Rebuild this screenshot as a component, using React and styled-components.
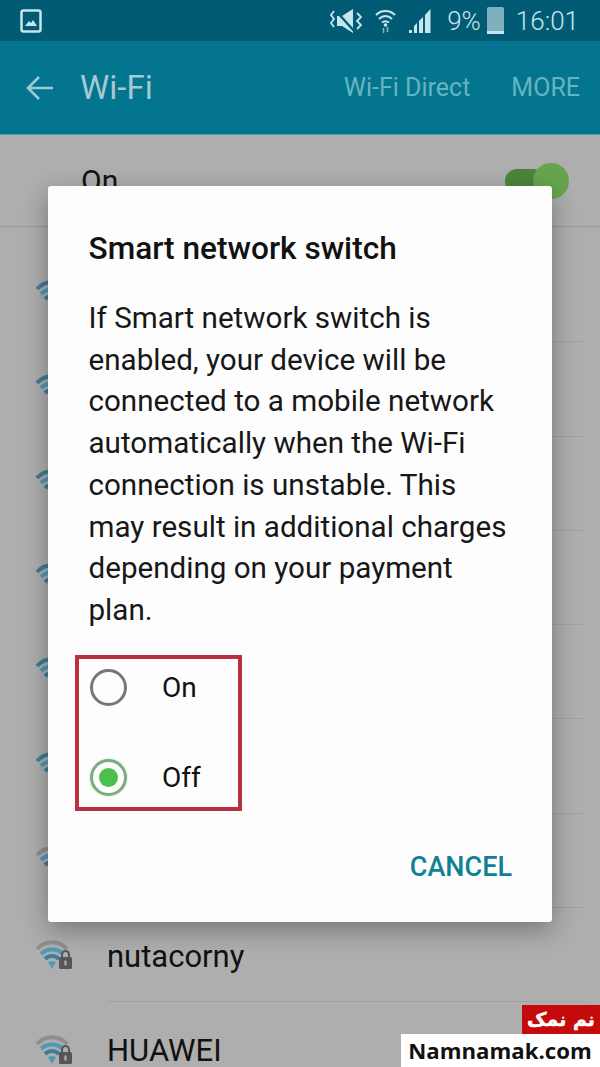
import styled, { createGlobalStyle } from "styled-components";

const GlobalStyle = createGlobalStyle`
  html, body {
    margin: 0;
    padding: 0;
    background: #aeaeae;
  }
  * {
    box-sizing: border-box;
  }
`;

const networks = ["", "", "", "", "", "", "", "nutacorny", "HUAWEI"];

const WifiLock = ({ faded }) => (
  <svg width="40" height="34" viewBox="0 0 40 34" fill="none">
    <path d="M2 12 C10 3 24 3 32 12" stroke={faded ? "#8f8f8f" : "#3f7d97"} strokeWidth="4" />
    <path d="M6 17 C12 11 22 11 28 17" stroke="#4f9ab6" strokeWidth="4" />
    <path d="M10 22 C14 18 20 18 24 22" stroke="#3f7d97" strokeWidth="4" />
    <path d="M13 25 L17 32 L21 25 C19 24 15 24 13 25 Z" fill="#4f9ab6" />
    <rect x="24" y="20" width="13" height="12" rx="1.5" fill="#565656" />
    <path d="M27 21 V17.5 a3.5 3.5 0 0 1 7 0 V21" stroke="#565656" strokeWidth="2" />
    <rect x="29.5" y="23.5" width="2" height="5" fill="#b5b5b5" />
  </svg>
);

const App = () => {
  return (
    <Screen>
      <GlobalStyle />
      <StatusBar>
        <svg width="22" height="24" viewBox="0 0 22 24" fill="none">
          <rect x="1.5" y="1.5" width="19" height="21" rx="2" stroke="#c5e6ec" strokeWidth="2.5" />
          <path d="M5 17 L9 12 L11 14 L13 11 L17 17 Z" fill="#c5e6ec" />
        </svg>
        <StatusRight>
          <svg width="32" height="26" viewBox="0 0 32 26" fill="none">
            <path d="M7 8 H12 L23 1 V25 L12 18 H7 Z" fill="#c5e6ec" />
            <path d="M6 3 L25 24" stroke="#025b74" strokeWidth="2.4" />
            <path d="M4 3 L1 7 L4 11 L1 15 L4 19" stroke="#c5e6ec" strokeWidth="1.8" />
            <path d="M27 5 L31 9 L27 13 L31 17 L27 21" stroke="#c5e6ec" strokeWidth="1.8" />
          </svg>
          <svg width="21" height="24" viewBox="0 0 21 24" fill="none">
            <path d="M1 6 C6 0.5 15 0.5 20 6" stroke="#c5e6ec" strokeWidth="2" />
            <path d="M4 10 C8 6 13 6 17 10" stroke="#c5e6ec" strokeWidth="2" />
            <path d="M7 13.5 C9 12 12 12 14 13.5" stroke="#c5e6ec" strokeWidth="2" />
            <circle cx="10.5" cy="16" r="1.8" fill="#c5e6ec" />
            <path d="M8.5 19 V24 M12.5 18 V23" stroke="#7fb4c0" strokeWidth="1.6" />
          </svg>
          <svg width="22" height="24" viewBox="0 0 22 24">
            <rect x="0" y="21" width="3" height="3" fill="#c5e6ec" />
            <path d="M5 24 V17 L8 14 V24 Z M10 24 V12 L14 8 V24 Z M16 24 V6 L21.5 0 V24 Z" fill="#c5e6ec" />
          </svg>
          <Percent>9%</Percent>
          <Battery />
          <Clock>16:01</Clock>
        </StatusRight>
      </StatusBar>
      <AppBar>
        <svg width="28" height="26" viewBox="0 0 28 26" fill="none">
          <path d="M27 13 H3 M13 2 L2 13 L13 24" stroke="#9cc9d2" strokeWidth="2.6" />
        </svg>
        <Title>Wi-Fi</Title>
        <Action>Wi-Fi Direct</Action>
        <Action $last>MORE</Action>
      </AppBar>
      <ToggleRow>
        <ToggleLabel>On</ToggleLabel>
        <Toggle>
          <Thumb />
        </Toggle>
      </ToggleRow>
      <NetworkList>
        {networks.map((name, i) => (
          <NetworkRow key={i}>
            <WifiLock faded={i >= 6} />
            <NetworkBody $first={i === 0}>
              <NetworkName>{name}</NetworkName>
            </NetworkBody>
          </NetworkRow>
        ))}
      </NetworkList>

      <Dialog>
        <DialogTitle>Smart network switch</DialogTitle>
        <DialogText>
          If Smart network switch is
          <br />
          enabled, your device will be
          <br />
          connected to a mobile network
          <br />
          automatically when the Wi-Fi
          <br />
          connection is unstable. This
          <br />
          may result in additional charges
          <br />
          depending on your payment
          <br />
          plan.
        </DialogText>
        <RadioBox>
          <RadioRow>
            <Radio />
            <RadioLabel>On</RadioLabel>
          </RadioRow>
          <RadioRow>
            <Radio $checked />
            <RadioLabel>Off</RadioLabel>
          </RadioRow>
        </RadioBox>
        <DialogFooter>
          <Cancel>CANCEL</Cancel>
        </DialogFooter>
      </Dialog>

      <Watermark>
        <WatermarkFa lang="fa" dir="rtl">نم نمک</WatermarkFa>
        <WatermarkEn>Namnamak.com</WatermarkEn>
      </Watermark>
    </Screen>
  );
};

const Screen = styled.div`
  position: relative;
  width: 600px;
  height: 1067px;
  overflow: hidden;
  background: #aeaeae;
  font-family: Roboto, "Liberation Sans", sans-serif;
`;

const StatusBar = styled.div`
  display: flex;
  align-items: center;
  justify-content: space-between;
  height: 41px;
  padding: 0 21px 0 20px;
  background: #025b74;
`;

const StatusRight = styled.div`
  display: flex;
  align-items: center;
  gap: 13px;
  color: #c5e6ec;
`;

const Percent = styled.span`
  margin-left: 3px;
  font-size: 26px;
  font-weight: 300;
`;

const Battery = styled.div`
  width: 17px;
  height: 27px;
  margin: 0 -1px 0 -7px;
  background: #7fb0bd;
  border-bottom: 3px solid #c5e6ec;
  border-radius: 2px 2px 0 0;
`;

const Clock = styled.span`
  font-size: 26px;
  font-weight: 300;
`;

const AppBar = styled.div`
  display: flex;
  align-items: center;
  height: 94px;
  padding: 0 20px 0 26px;
  background: #04758f;
  border-bottom: 1px solid #5c9aa9;
`;

const Title = styled.h1`
  flex: 1;
  margin: 0 0 0 26px;
  font-size: 33px;
  font-weight: 400;
  color: #a4c9d1;
`;

const Action = styled.span`
  margin-left: ${(p) => (p.$last ? "41px" : "0")};
  font-size: 25px;
  color: #66b4c1;
`;

const ToggleRow = styled.div`
  display: flex;
  align-items: center;
  justify-content: space-between;
  height: 92px;
  padding: 0 55px 0 81px;
  border-bottom: 1px solid #9a9a9a;
`;

const ToggleLabel = styled.span`
  font-size: 30px;
  color: #111;
`;

const Toggle = styled.div`
  position: relative;
  width: 40px;
  height: 24px;
  background: #4a863a;
  border-radius: 12px;
`;

const Thumb = styled.div`
  position: absolute;
  top: -6px;
  right: -24px;
  width: 36px;
  height: 36px;
  border-radius: 50%;
  background: #66a54d;
`;

const NetworkList = styled.div`
  display: flex;
  flex-direction: column;
  padding-top: 20px;
`;

const NetworkRow = styled.div`
  display: flex;
  align-items: center;
  height: 94.3px;
  padding-left: 35px;
`;

const NetworkBody = styled.div`
  display: flex;
  align-items: center;
  flex: 1;
  align-self: stretch;
  margin: 0 15px 0 32px;
  padding-top: 3px;
  border-top: 1px solid ${(p) => (p.$first ? "transparent" : "#a0a0a0")};
`;

const NetworkName = styled.span`
  font-size: 31px;
  line-height: 1;
  color: #111;
`;

const Dialog = styled.div`
  position: absolute;
  top: 186px;
  left: 48px;
  width: 504px;
  height: 736px;
  padding: 43px 20px 0 40.5px;
  background: #fdfdfd;
  border-radius: 3px;
  box-shadow: 0 8px 26px rgba(0, 0, 0, 0.32);
`;

const DialogTitle = styled.h2`
  margin: 0;
  font-size: 31.6px;
  line-height: 40px;
  font-weight: 500;
  color: #111;
`;

const DialogText = styled.p`
  margin: 29px 0 0;
  font-size: 29.6px;
  line-height: 41.7px;
  white-space: nowrap;
  color: #171717;
`;

const RadioBox = styled.div`
  display: flex;
  flex-direction: column;
  gap: 53px;
  width: 167px;
  height: 156px;
  margin: 23px 0 0 -13.5px;
  padding: 10px 0 0 11px;
  border: 4px solid #b9303f;
`;

const RadioRow = styled.div`
  display: flex;
  align-items: center;
  height: 37px;
`;

const Radio = styled.div`
  display: flex;
  flex: none;
  align-items: center;
  justify-content: center;
  width: 37px;
  height: 37px;
  border-radius: 50%;
  border: 3px solid ${(p) => (p.$checked ? "#7cab80" : "#777")};
  box-shadow: ${(p) => (p.$checked ? "0 0 3px #bde8bf" : "none")};
  &::after {
    content: "";
    display: ${(p) => (p.$checked ? "block" : "none")};
    width: 19px;
    height: 19px;
    border-radius: 50%;
    background: #4bc04f;
  }
`;

const RadioLabel = styled.span`
  margin-left: 35px;
  font-size: 28px;
  color: #111;
`;

const DialogFooter = styled.div`
  display: flex;
  justify-content: flex-end;
  margin-top: 40px;
`;

const Cancel = styled.span`
  margin-right: 20px;
  font-size: 27px;
  font-weight: 500;
  color: #0e8295;
`;

const Watermark = styled.div`
  position: absolute;
  right: 0;
  bottom: 0;
  display: flex;
  flex-direction: column;
  align-items: flex-end;
`;

const WatermarkFa = styled.div`
  width: 78px;
  height: 29px;
  background: #c40a0a;
  color: #fff;
  font-family: "DejaVu Sans", sans-serif;
  font-size: 19px;
  font-weight: 700;
  line-height: 29px;
  text-align: center;
  -webkit-text-stroke: 0.5px #fff;
`;

const WatermarkEn = styled.div`
  width: 199px;
  height: 33px;
  padding-right: 1px;
  background: #fff;
  color: #111;
  font-family: "Open Sans", sans-serif;
  font-size: 22.2px;
  font-weight: 700;
  line-height: 33px;
  text-align: center;
`;

export default App;
